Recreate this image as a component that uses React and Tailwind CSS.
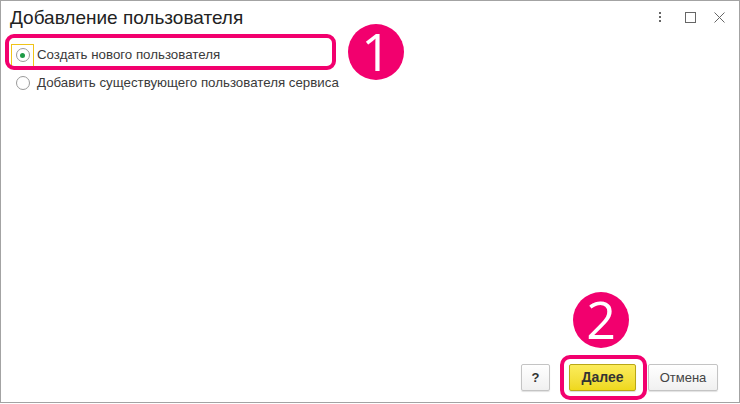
import { useState } from 'react'

const options = [
  { id: 'new', label: 'Создать нового пользователя' },
  { id: 'existing', label: 'Добавить существующего пользователя сервиса' },
]

function Radio({ checked }) {
  return (
    <span className="flex h-[14px] w-[14px] items-center justify-center rounded-full border border-[#9a9a9a] bg-white">
      {checked && <span className="h-[5px] w-[5px] rounded-full bg-[#1e9a46]" />}
    </span>
  )
}

function Marker({ n, className }) {
  return (
    <div
      className={`absolute flex h-[56px] w-[56px] items-center justify-center rounded-full bg-[#f2006e] text-[52px] leading-none text-white ${className}`}
      style={{ fontFamily: '"Open Sans", "Noto Sans", sans-serif' }}
    >
      <span className="-mt-[2px]">{n}</span>
    </div>
  )
}

export default function App() {
  const [value, setValue] = useState('new')

  return (
    <div
      className="relative flex h-[403px] w-[740px] flex-col border border-[#a3a3a3] bg-white text-[#333]"
      style={{ fontFamily: '"Liberation Sans", Arial, sans-serif' }}
    >
      {/* Header */}
      <div className="flex h-[32px] items-center justify-between pl-[9px] pr-[14px]">
        <h1 className="text-[19px] leading-none text-[#222]">Добавление пользователя</h1>
        <div className="flex items-center text-[#666]">
          <svg width="4" height="10" viewBox="0 0 4 10" fill="currentColor">
            <rect x="1" y="0" width="2" height="2" />
            <rect x="1" y="4" width="2" height="2" />
            <rect x="1" y="8" width="2" height="2" />
          </svg>
          <svg className="ml-[23px]" width="11" height="11" viewBox="0 0 11 11" fill="none" stroke="currentColor" strokeWidth="1">
            <rect x="0.5" y="0.5" width="10" height="10" />
          </svg>
          <svg className="ml-[18px]" width="11" height="11" viewBox="0 0 11 11" fill="none" stroke="currentColor" strokeWidth="1">
            <path d="M0.5 0.5 L10.5 10.5 M10.5 0.5 L0.5 10.5" />
          </svg>
        </div>
      </div>

      {/* Options */}
      <div className="flex flex-col gap-[4px] pl-[13px] pt-[10px]">
        {options.map((o, i) => (
          <label
            key={o.id}
            onClick={() => setValue(o.id)}
            className="flex h-[24px] cursor-default items-center text-[13.3px] text-[#3a3a3a]"
          >
            <span
              className={`-ml-[3px] flex h-[23px] w-[23px] items-center justify-center ${
                i === 0 ? 'border border-[#f0c419]' : ''
              }`}
            >
              <Radio checked={value === o.id} />
            </span>
            <span className="ml-[3px]">{o.label}</span>
          </label>
        ))}
      </div>

      <div className="flex-1" />

      {/* Footer */}
      <div className="flex items-center justify-end pb-[11px] pr-[21px]">
        <button className="h-[27px] w-[29px] rounded-[2px] border border-[#c4c4c4] bg-gradient-to-b from-white to-[#f0f0f0] text-[13px] font-bold text-[#333] shadow-[0_1px_1px_rgba(0,0,0,0.12)]">
          ?
        </button>
        <div className="relative ml-[19px]">
          <div className="pointer-events-none absolute -bottom-[9px] -left-[9px] -right-[11px] -top-[9px] rounded-[10px] border-[4px] border-[#f2006e]" />
          <button className="h-[27px] w-[67px] rounded-[2px] border border-[#b9a716] bg-gradient-to-b from-[#fbec5a] to-[#efd81a] text-[14px] font-bold text-[#333] shadow-[0_1px_1px_rgba(0,0,0,0.15)]">
            Далее
          </button>
        </div>
        <button className="ml-[12px] h-[27px] w-[70px] rounded-[2px] border border-[#c4c4c4] bg-gradient-to-b from-white to-[#f0f0f0] text-[13px] text-[#444] shadow-[0_1px_1px_rgba(0,0,0,0.12)]">
          Отмена
        </button>
      </div>

      {/* Annotations */}
      <div className="pointer-events-none absolute left-[4px] top-[33px] h-[36px] w-[331px] rounded-[9px] border-[4px] border-[#f2006e]" />
      <Marker n="1" className="left-[347px] top-[23px]" />
      <Marker n="2" className="left-[572px] top-[291px]" />
    </div>
  )
}
